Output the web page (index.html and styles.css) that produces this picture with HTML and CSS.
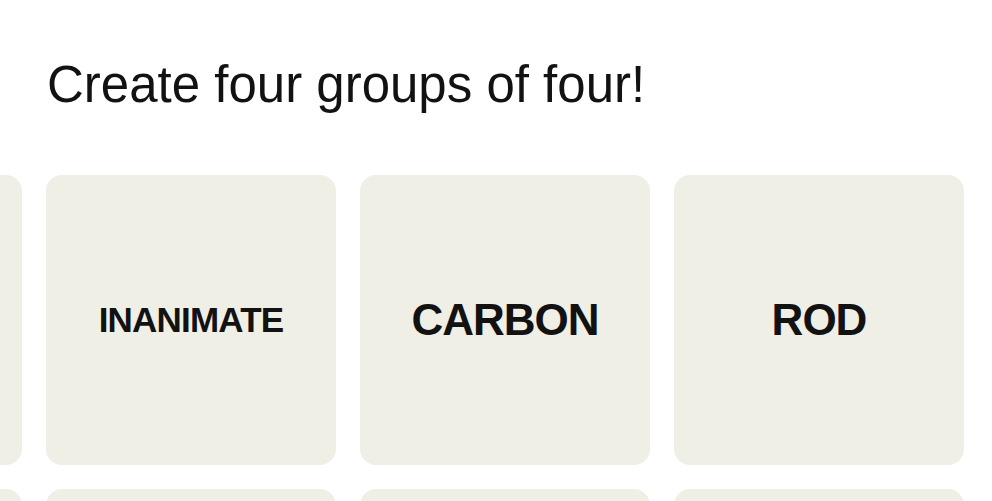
FILE: index.html
```html
<!DOCTYPE html>
<html>
<head>
<meta charset="utf-8">
<link rel="stylesheet" href="styles.css">
</head>
<body>
<main class="game">
  <h1 class="prompt">Create four groups of four!</h1>
  <div class="board">
    <div class="row">
      <div class="tile"></div>
      <div class="tile"><span class="word small">INANIMATE</span></div>
      <div class="tile"><span class="word">CARBON</span></div>
      <div class="tile"><span class="word">ROD</span></div>
    </div>
    <div class="row">
      <div class="tile"></div>
      <div class="tile"></div>
      <div class="tile"></div>
      <div class="tile"></div>
    </div>
  </div>
</main>
</body>
</html>
```
FILE: styles.css
```css
html, body {
  margin: 0;
  padding: 0;
  background: #ffffff;
  overflow: hidden;
}
.game {
  width: 992px;
  height: 501px;
  overflow: hidden;
}
.prompt {
  margin: 0;
  padding: 55px 0 0 47px;
  height: 175px;
  box-sizing: border-box;
  font-family: "Liberation Sans", sans-serif;
  font-weight: 400;
  font-size: 51px;
  line-height: 60px;
  color: #121212;
}
.board {
  display: flex;
  flex-direction: column;
  gap: 24px;
  margin-left: -268px;
}
.row {
  display: flex;
  gap: 24px;
}
.tile {
  flex: 0 0 290px;
  height: 290px;
  border-radius: 16px;
  background: #efefe6;
  display: flex;
  align-items: center;
  justify-content: center;
}
.word {
  font-family: "Liberation Sans", sans-serif;
  font-weight: 700;
  font-size: 44px;
  letter-spacing: -1px;
  color: #121212;
}
.word.small {
  font-size: 35px;
  letter-spacing: -0.8px;
}
```
